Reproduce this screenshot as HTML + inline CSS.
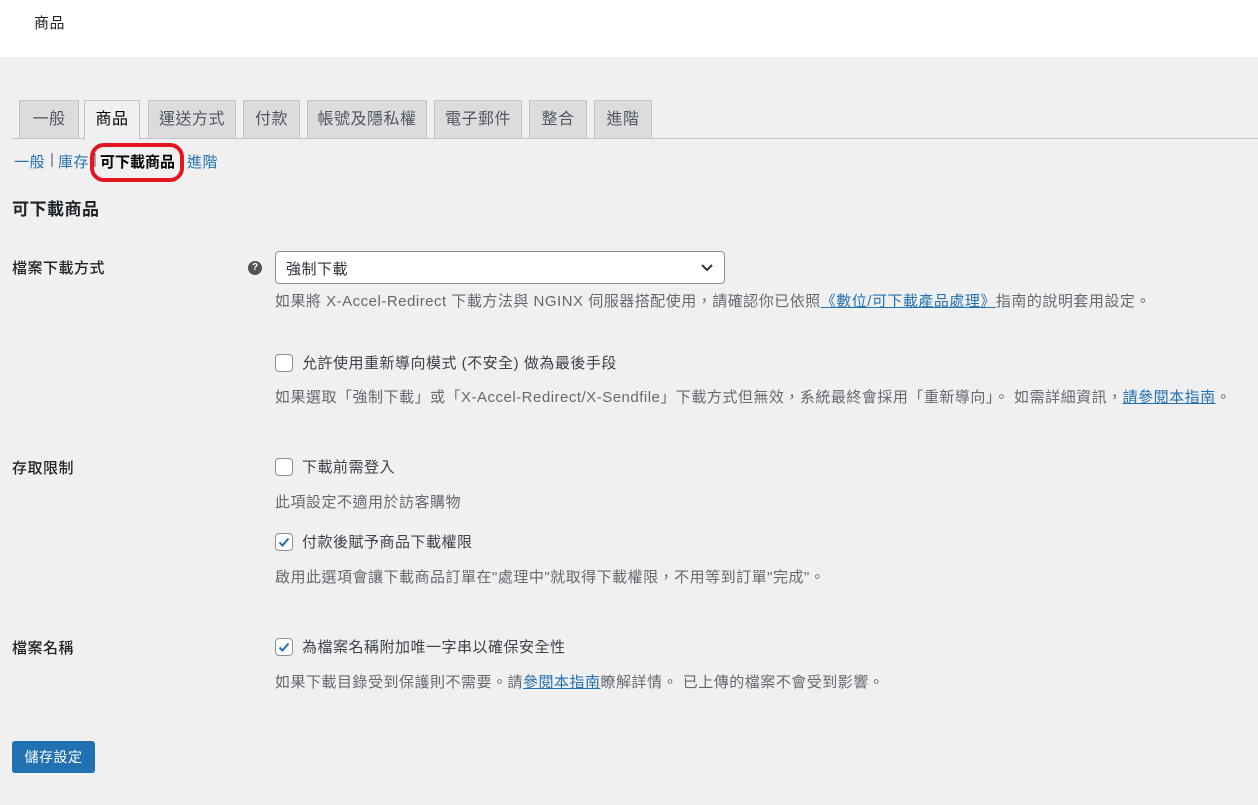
<html><head><style>
body{margin:0;width:1258px;height:805px;background:#f0f0f1;font-family:"Liberation Sans","Noto Sans CJK TC",sans-serif;font-size:15px;letter-spacing:0.5px;color:#3c434a;position:relative;overflow:hidden}
.a{position:absolute;white-space:nowrap}
.hdr{position:absolute;left:0;top:0;width:1258px;height:57px;background:#fff}
.tab{position:absolute;top:100px;height:38px;background:#dcdcde;border:1px solid #c3c4c7;border-bottom:none;box-sizing:border-box;font-size:16px;color:#50575e;text-align:center;line-height:38px;letter-spacing:0.5px}
.tab.on{background:#f0f0f1;color:#000;height:40px}
.line{position:absolute;left:12px;top:138px;width:1246px;height:1px;background:#c3c4c7}
a{color:#2271b1;text-decoration:underline}
.lbl{font-weight:500;color:#1d2327}
.desc{color:#646970}
.cb{position:absolute;width:16px;height:16px;border:1px solid #8c8f94;border-radius:4px;background:#fff}
.nav a{text-decoration:none}
</style></head><body>
<div class="hdr"><div class="a" style="left:34px;top:12px;color:#1d2327;font-size:15px">商品</div></div>
<div class="tab" style="left:19px;width:60px">一般</div>
<div class="line"></div>
<div class="tab on" style="left:84px;width:56px">商品</div>
<div class="tab" style="left:148px;width:88px">運送方式</div>
<div class="tab" style="left:243px;width:57px">付款</div>
<div class="tab" style="left:307px;width:120px">帳號及隱私權</div>
<div class="tab" style="left:434px;width:88px">電子郵件</div>
<div class="tab" style="left:529px;width:58px">整合</div>
<div class="tab" style="left:594px;width:58px">進階</div>
<div class="nav">
<a class="a" style="left:14px;top:151px">一般</a>
<span class="a" style="left:50px;top:151px;color:#646970">|</span>
<a class="a" style="left:58px;top:151px">庫存</a>
<span class="a" style="left:93px;top:151px;color:#646970">|</span>
<b class="a" style="left:100px;top:151px;color:#000;font-weight:600;letter-spacing:0">可下載商品</b>
<a class="a" style="left:187px;top:151px">進階</a>
</div>
<div class="a" style="left:90px;top:143px;width:94px;height:39px;border:4px solid #e3151e;border-radius:14px;box-sizing:border-box"></div>
<div class="a" style="left:12px;top:195px;font-size:17px;font-weight:600;color:#1d2327">可下載商品</div>
<div class="a lbl" style="left:12px;top:257px">檔案下載方式</div>
<div class="a" style="left:248px;top:261px;width:14px;height:14px;border-radius:50%;background:#555;color:#fff;font-size:10px;font-weight:bold;text-align:center;line-height:14px;letter-spacing:0">?</div>
<div class="a" style="left:275px;top:251px;width:450px;height:33px;border:1px solid #8c8f94;border-radius:4px;background:#fff;box-sizing:border-box"><span class="a" style="left:10px;top:6px;color:#2c3338">強制下載</span>
<svg class="a" style="right:10px;top:11px" width="14" height="10" viewBox="0 0 14 10"><path d="M2 2l5 5 5-5" stroke="#2c3338" stroke-width="2" fill="none"/></svg></div>
<div class="a desc" style="left:275px;top:290px">如果將 X-Accel-Redirect 下載方法與 NGINX 伺服器搭配使用，請確認你已依照<a>《數位/可下載產品處理》</a>指南的說明套用設定。</div>
<div class="cb" style="left:275px;top:354px"></div>
<div class="a" style="left:302px;top:352px;color:#3c434a">允許使用重新導向模式 (不安全) 做為最後手段</div>
<div class="a desc" style="left:275px;top:386px">如果選取「強制下載」或「X-Accel-Redirect/X-Sendfile」下載方式但無效，系統最終會採用「重新導向」。 如需詳細資訊，<a>請參閱本指南</a>。</div>
<div class="a lbl" style="left:12px;top:457px">存取限制</div>
<div class="cb" style="left:275px;top:458px"></div>
<div class="a" style="left:302px;top:456px">下載前需登入</div>
<div class="a desc" style="left:275px;top:491px">此項設定不適用於訪客購物</div>
<div class="cb" style="left:275px;top:533px"><svg width="16" height="16" viewBox="0 0 16 16" style="position:absolute;left:0;top:0"><path d="M3.5 8.5l3 3 6-7" stroke="#2271b1" stroke-width="2" fill="none"/></svg></div>
<div class="a" style="left:302px;top:531px">付款後賦予商品下載權限</div>
<div class="a desc" style="left:275px;top:566px">啟用此選項會讓下載商品訂單在"處理中"就取得下載權限，不用等到訂單"完成"。</div>
<div class="a lbl" style="left:12px;top:637px">檔案名稱</div>
<div class="cb" style="left:275px;top:638px"><svg width="16" height="16" viewBox="0 0 16 16" style="position:absolute;left:0;top:0"><path d="M3.5 8.5l3 3 6-7" stroke="#2271b1" stroke-width="2" fill="none"/></svg></div>
<div class="a" style="left:302px;top:636px">為檔案名稱附加唯一字串以確保安全性</div>
<div class="a desc" style="left:275px;top:671px">如果下載目錄受到保護則不需要。請<a>參閱本指南</a>瞭解詳情。 已上傳的檔案不會受到影響。</div>
<div class="a" style="left:12px;top:741px;width:83px;height:32px;background:#2271b1;border-radius:3px;color:#fff;text-align:center;line-height:32px;font-size:14px">儲存設定</div>
</body></html>
